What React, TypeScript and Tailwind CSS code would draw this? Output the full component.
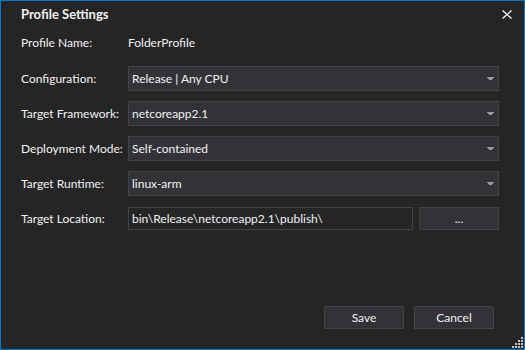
const Caret = () => (
    <svg width="7" height="4" viewBox="0 0 7 4" className="text-[#999999]">
        <path d="M0 0h7v1H0zM1 1h5v1H1zM2 2h3v1H2z" fill="currentColor" />
    </svg>
)

const Select = ({ value }: { value: string }) => (
    <div className="flex h-[25px] flex-1 items-center justify-between border border-[#434346] bg-[#333337] pl-[3px] pr-[4px]">
        <span>{value}</span>
        <Caret />
    </div>
)

const Row = ({ label, children }: { label: string; children: React.ReactNode }) => (
    <div className="flex items-center">
        <span className="w-[107px] shrink-0 whitespace-nowrap">{label}</span>
        {children}
    </div>
)

const Grip = () => (
    <svg width="11" height="11" viewBox="0 0 11 11" className="absolute bottom-[1px] right-[1px]">
        {[
            [9, 0], [9, 3], [6, 3], [9, 6], [6, 6], [3, 6], [9, 9], [6, 9], [3, 9], [0, 9],
        ].map(([x, y], i) => (
            <rect key={i} x={x} y={y} width="2" height="2" fill="#c8c8c8" />
        ))}
    </svg>
)

export default function App() {
    return (
        <div
            className="relative flex h-[350px] w-[525px] flex-col border border-[#007acc] bg-[#252526] text-[12px] text-[#f1f1f1]"
            style={{ fontFamily: 'Lato, "Noto Sans", sans-serif' }}
        >
            <div className="flex h-[27px] items-center justify-between pl-[20px] pr-[7px]">
                <span className="text-[13px] font-bold">Profile Settings</span>
                <button className="flex h-[20px] w-[20px] items-center justify-center">
                    <svg width="10" height="9" viewBox="0 0 10 9">
                        <path d="M0.5 0.5l9 8M9.5 0.5l-9 8" stroke="#f1f1f1" strokeWidth="1.4" />
                    </svg>
                </button>
            </div>

            <div className="mt-[5px] flex flex-col pl-[20px] pr-[25px]">
                <Row label="Profile Name:">
                    <span className="flex h-[20px] items-center">FolderProfile</span>
                </Row>
                <div className="mt-[13px] flex flex-col gap-[10px]">
                    <Row label="Configuration:">
                        <Select value="Release | Any CPU" />
                    </Row>
                    <Row label="Target Framework:">
                        <Select value="netcoreapp2.1" />
                    </Row>
                    <Row label="Deployment Mode:">
                        <Select value="Self-contained" />
                    </Row>
                    <Row label="Target Runtime:">
                        <Select value="linux-arm" />
                    </Row>
                </div>
                <div className="mt-[11px]">
                    <Row label="Target Location:">
                        <div className="flex h-[23px] flex-1 items-center border border-[#434346] bg-[#252526] pl-[3px]">
                            bin\Release\netcoreapp2.1\publish\
                        </div>
                        <button className="ml-[6px] flex h-[23px] w-[80px] items-center justify-center border border-[#434346] bg-[#333337]">
                            ...
                        </button>
                    </Row>
                </div>
            </div>

            <div className="mt-auto mb-[20px] flex justify-end gap-[10px] pr-[30px]">
                <button className="h-[23px] w-[80px] border border-[#434346] bg-[#333337]">Save</button>
                <button className="h-[23px] w-[80px] border border-[#434346] bg-[#333337]">Cancel</button>
            </div>
            <Grip />
        </div>
    )
}
